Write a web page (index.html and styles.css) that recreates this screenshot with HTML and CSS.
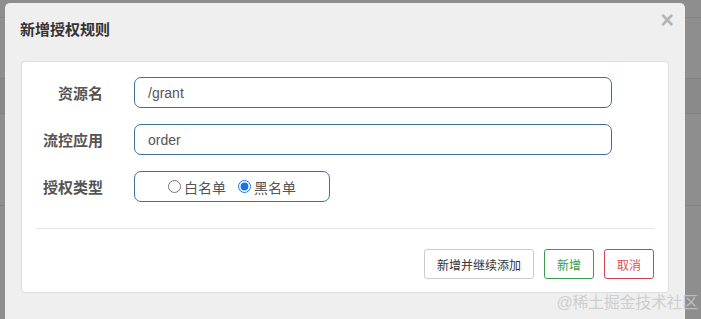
FILE: index.html
```html
<!DOCTYPE html>
<html lang="zh-CN">
<head>
    <meta charset="UTF-8">
    <meta name="viewport" content="width=device-width, initial-scale=1.0">
    <title>新增授权规则</title>
    <link rel="stylesheet" href="styles.css">
</head>
<body>

    <!-- Dimmed page behind the dialog -->
    <div class="page">
        <div class="page-row row-a"></div>
        <div class="page-row row-b"></div>
        <div class="page-row row-c"></div>
        <div class="page-row row-d"></div>
    </div>

    <!-- Dialog -->
    <div class="modal">
        <div class="modal-header">
            <h4 class="modal-title">新增授权规则</h4>
            <span class="close">&times;</span>
        </div>

        <div class="modal-body">
            <div class="panel">
                <form class="rule-form">
                    <div class="form-row">
                        <label class="form-label" for="resource">资源名</label>
                        <input class="form-input" type="text" id="resource" value="/grant">
                    </div>
                    <div class="form-row">
                        <label class="form-label" for="app">流控应用</label>
                        <input class="form-input" type="text" id="app" value="order">
                    </div>
                    <div class="form-row">
                        <span class="form-label">授权类型</span>
                        <div class="radio-box">
                            <label class="radio"><input type="radio" name="strategy" value="0">白名单</label>
                            <label class="radio"><input type="radio" name="strategy" value="1" checked>黑名单</label>
                        </div>
                    </div>
                </form>

                <div class="divider"></div>

                <div class="actions">
                    <button class="btn">新增并继续添加</button>
                    <button class="btn btn-ok">新增</button>
                    <button class="btn btn-cancel">取消</button>
                </div>
            </div>
        </div>
    </div>

    <div class="watermark">@稀土掘金技术社区</div>

</body>
</html>
```

FILE: styles.css
```css
/* General Reset */
* {
    margin: 0;
    padding: 0;
    box-sizing: border-box;
    font-family: 'Liberation Sans', 'Noto Sans CJK SC', sans-serif;
}

body {
    background: #8e8e8e;
    width: 701px;
    height: 319px;
    overflow: hidden;
    position: relative;
}

/* Dimmed page */
.page-row {
    border-bottom: 1px solid #838383;
}

.row-a {
    height: 18px;
}

.row-b {
    height: 61px;
}

.row-c {
    height: 35px;
    background: #8a8a8a;
}

.row-d {
    height: 92px;
}

/* Dialog */
.modal {
    position: absolute;
    left: 5px;
    top: 3px;
    width: 680px;
    height: 330px;
    background: #efefef;
    border-radius: 5px;
}

.modal-header {
    position: relative;
    height: 58px;
    padding: 17px 15px 0;
}

.modal-title {
    font-size: 15px;
    line-height: 20px;
    font-weight: bold;
    color: #333;
}

.close {
    position: absolute;
    top: 6px;
    right: 11px;
    font-size: 23px;
    line-height: 23px;
    font-weight: bold;
    color: #b4b4b4;
    cursor: pointer;
}

.modal-body {
    padding: 0 16px;
}

.panel {
    background: #fff;
    border: 1px solid #ddd;
    border-radius: 4px;
    height: 232px;
    padding: 15px 14px 13px;
}

/* Form */
.form-row {
    display: flex;
    align-items: center;
    margin-bottom: 16px;
}

.form-row:last-child {
    margin-bottom: 0;
}

.form-label {
    width: 67px;
    margin-right: 31px;
    text-align: right;
    font-size: 15px;
    font-weight: bold;
    color: #555;
}

.form-input {
    width: 478px;
    height: 31px;
    padding: 0 13px;
    border: 1px solid #3f6f9a;
    border-radius: 7px;
    font-size: 14px;
    color: #555;
    outline: none;
}

.radio-box {
    width: 196px;
    height: 31px;
    border: 1px solid #3f6f9a;
    border-radius: 7px;
    display: flex;
    align-items: center;
    justify-content: center;
    gap: 12px;
}

.radio {
    display: flex;
    align-items: center;
    font-size: 14px;
    color: #555;
}

.radio input {
    width: 13px;
    height: 13px;
    margin: 0 3px 0 0;
    accent-color: #1a73e8;
}

.divider {
    border-top: 1px solid #e5e5e5;
    margin-top: 26px;
}

/* Footer buttons */
.actions {
    display: flex;
    justify-content: flex-end;
    gap: 10px;
    padding-top: 20px;
}

.btn {
    height: 30px;
    padding: 0 12px;
    background: #fff;
    border: 1px solid #ccc;
    border-radius: 3px;
    font-size: 12px;
    color: #333;
}

.btn-ok {
    border-color: #3d9a4e;
    color: #3d9a4e;
}

.btn-cancel {
    border-color: #c9444f;
    color: #d9534f;
}

/* Watermark */
.watermark {
    position: absolute;
    right: 3px;
    bottom: 6px;
    font-size: 16px;
    line-height: 20px;
    color: rgba(200, 200, 200, 0.85);
    letter-spacing: -0.3px;
}
```
